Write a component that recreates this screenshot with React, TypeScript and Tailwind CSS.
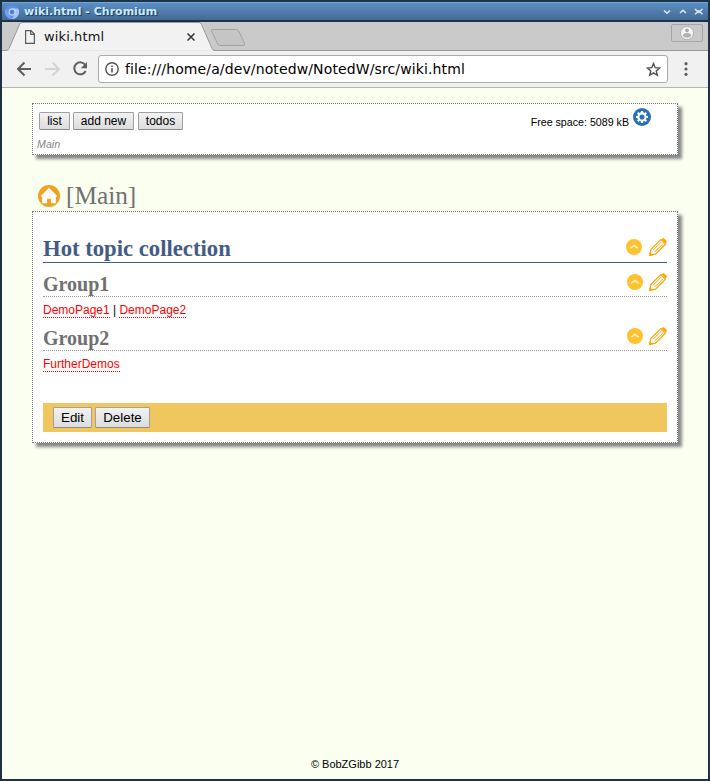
import React from 'react';

const SmallButton = ({ label, className }: { label: string; className: string }) => (
  <button
    className={`box-border flex h-[18px] shrink-0 items-center justify-center whitespace-nowrap rounded-[1.5px] border border-[#a0a0a0] border-b-[#8a8a8a] bg-linear-to-b from-[#f2f2f2] to-[#dddddd] p-0 text-[12px] leading-[14px] text-black ${className}`}
  >
    {label}
  </button>
);

const FooterButton = ({ label, className }: { label: string; className: string }) => (
  <button
    className={`box-border flex h-[21px] shrink-0 items-center justify-center rounded-[1.5px] border border-[#a0a0a0] border-b-[#8a8a8a] bg-linear-to-b from-[#f2f2f2] to-[#dddddd] p-0 text-[13.33px] leading-[15px] text-black ${className}`}
  >
    {label}
  </button>
);

const CollapseIcon = () => (
  <svg width="16" height="16" viewBox="0 0 16 16" className="shrink-0">
    <circle cx="8" cy="8" r="8" fill="#ffc12e" />
    <path d="M4.7 8.9 8 6.5l3.3 2.4" fill="none" stroke="#fff5d8" strokeWidth="1.5" strokeLinecap="round" />
  </svg>
);

const PencilIcon = () => (
  <svg width="18" height="18" viewBox="0 0 18 18" className="shrink-0" fill="none" stroke="#ffa200">
    <path d="M.8 17.200 1.900 11.500 11.800 1.600 16.400 6.200 6.500 16.100Z" strokeWidth="1.200" />
    <path d="M4 12.300 12.300 4M5.700 14 14 5.700" strokeWidth="1" />
    <path d="M12.500 1.500 13.500.5Q14.400-.2 15.200.6L17.400 2.800Q18.200 3.600 17.500 4.500L16.500 5.500Z" fill="#ffa500" stroke="none" />
    <path d="m0 18 .8-4 3.200 3.200Z" fill="#ffa500" stroke="none" />
  </svg>
);

const SectionTools = ({ className }: { className: string }) => (
  <div className={`flex items-center ${className}`}>
    <CollapseIcon />
    <PencilIcon />
  </div>
);

const Group = ({ title }: { title: string }) => (
  <div className="flex h-[27px] items-start justify-between border-b border-dotted border-[#999]">
    <h2 className="pt-px font-['Liberation_Serif',serif] text-[20px] leading-[26px] font-bold text-[#707070]">{title}</h2>
    <SectionTools className="mt-[3px] gap-[6px]" />
  </div>
);

const WikiLink = ({ label }: { label: string }) => (
  <a className="h-[15px] border-b border-dotted border-[#f00] text-[#f00]">{label}</a>
);

const TitleBar = () => (
  <div className="flex h-[18px] items-center border-t border-[#6fa8dc] bg-linear-to-b from-[#5c8fc3] to-[#446a96] pr-[5px] pl-[3px]">
    <svg width="14" height="14" viewBox="0 0 14 14">
      <circle cx="7" cy="7" r="7" fill="#5b8def" />
      <path d="M7 3.5h6.1A7 7 0 0 1 7 14L10 8.8Z" fill="#a6c4f8" />
      <path d="M1 3.4 4 8.8 7 14A7 7 0 0 1 1 3.4Z" fill="#779ff0" />
      <circle cx="7" cy="7" r="3.4" fill="#e4eefc" />
      <circle cx="7" cy="7" r="2.5" fill="#4a7fdf" />
    </svg>
    <span className="ml-[5px] grow font-['DejaVu_Sans',sans-serif] text-[11px] leading-[14px] font-bold text-[#c8eaff] [text-shadow:1px_1px_1px_#1b3858]">
      wiki.html - Chromium
    </span>
    <svg width="40" height="10" viewBox="0 0 40 10" fill="none" stroke="#dce9f5" strokeWidth="1.5">
      <path d="m1 3.5 3 2.700 3-2.700M17 6l3-2.700 3 2.700M32 2c2.500 3 5 3 7.500 0M32 7.200c2.500-3 5-3 7.500 0" />
    </svg>
  </div>
);

const TabStrip = () => (
  <div className="relative flex h-[29px] border-b border-[#999] bg-[#cacaca] font-['DejaVu_Sans',sans-serif]">
    <svg className="absolute top-0 left-0" width="246" height="29" viewBox="0 0 246 29">
      <path d="M0 28.500H4Q6 28.500 7 26.500L17.500 2.500Q18.500.5 20 .5H197Q198.500.5 199.500 2.500L210 26.500Q211 28.500 213 28.500" fill="#f2f2f2" stroke="#999" />
      <path d="M5.500 29H211" stroke="#f2f2f2" strokeWidth="1.500" />
      <path d="M210.500 7.500H234.500Q236 7.500 236.700 9L242.500 21.500Q243 23.500 241 23.500H218Q216.500 23.500 215.700 22L209.500 9Q209 7.500 210.500 7.500Z" fill="#c5c5c5" stroke="#a2a2a2" />
    </svg>
    <div className="relative flex h-full w-[193px] items-center pt-px pl-[23px]">
      <svg width="10" height="14" viewBox="0 0 10 14" fill="none" stroke="#5a5a5a" strokeWidth="1.200">
        <path d="M.6.6H6L9.400 4V13.400H.6ZM5.700.7V4.300H9.300" />
      </svg>
      <span className="ml-[9px] grow text-[13px] leading-[18px] tracking-[0.12px] text-[#111]">wiki.html</span>
      <svg width="8" height="8" viewBox="0 0 8 8" stroke="#333" strokeWidth="1.500">
        <path d="m.5.5 7 7m0-7-7 7" />
      </svg>
    </div>
    <div className="mt-[2px] mr-[5px] ml-auto flex h-[18px] w-[32px] items-center justify-center rounded-[2px] border border-[#a6a6a6] bg-[#c9c9c9]">
      <svg width="14" height="14" viewBox="0 0 14 14">
        <circle cx="7" cy="7" r="6.500" fill="#f6f6f6" stroke="#999" strokeWidth=".6" />
        <circle cx="7" cy="4.300" r="1.900" fill="#aaa" />
        <ellipse cx="7" cy="9.300" rx="3.800" ry="1.900" fill="#b5b5b5" stroke="#999" strokeWidth=".6" />
      </svg>
    </div>
  </div>
);

const Toolbar = () => (
  <div className="flex h-[37px] items-center border-b border-[#b5b5b5] bg-[#f1f1f1] pl-[15px]">
    <svg width="72" height="16" viewBox="0 0 72 16" fill="none" strokeWidth="2" className="shrink-0">
      <path d="M14 8H1.500M7.500 1.500 1 8l6.500 6.500" stroke="#5c5e61" />
      <path d="M28 8H41.500M35.500 1.500 42 8l-6.500 6.500" stroke="#d3d4d5" />
      <path d="M68.300 4A6 6 0 1 0 68.700 10" stroke="#5c5e61" />
      <path d="M70 1v6.200h-6.200Z" fill="#5c5e61" />
    </svg>
    <div className="ml-[9px] flex h-[28px] w-[570px] shrink-0 items-center rounded-[3px] border border-[#aaa] bg-white pr-[6px] pl-[6px]">
      <svg width="14" height="14" viewBox="0 0 14 14" fill="none" stroke="#555">
        <circle cx="7" cy="7" r="6.200" strokeWidth="1.400" />
        <path d="M7 6.200v4.300M7 3.500v1.600" strokeWidth="1.600" />
      </svg>
      <span className="ml-[6px] grow font-['DejaVu_Sans',sans-serif] text-[14px] leading-[20px] tracking-[0.12px] whitespace-nowrap text-black">
        file:///home/a/dev/notedw/NotedW/src/wiki.html
      </span>
      <svg width="15" height="15" viewBox="0 0 15 15" fill="none" stroke="#505050" strokeWidth="1.400">
        <path d="m7.500 1.500 1.700 4.200 4.400.3-3.400 2.900 1.100 4.400-3.800-2.400-3.800 2.400 1.100-4.400L1.400 6l4.400-.3Z" />
      </svg>
    </div>
    <svg className="ml-[16px]" width="4" height="14" viewBox="0 0 4 14" fill="#5c5e61">
      <circle cx="2" cy="1.700" r="1.600" />
      <circle cx="2" cy="7" r="1.600" />
      <circle cx="2" cy="12.300" r="1.600" />
    </svg>
  </div>
);

const SettingsIcon = () => (
  <svg width="18" height="18" viewBox="0 0 18 18" className="ml-[4px]">
    <circle cx="9" cy="9" r="9" fill="#2870b8" />
    <g stroke="#fff" fill="none">
      <circle cx="9" cy="9" r="3.600" strokeWidth="2.100" />
      <path d="M9 3v2M9 13v2M3 9h2M13 9h2M4.760 4.760l1.400 1.400M11.840 11.840l1.400 1.400M4.760 13.240l1.400-1.400M11.840 6.160l1.400-1.400" strokeWidth="2.200" />
    </g>
  </svg>
);

const HomeIcon = () => (
  <svg width="22" height="22" viewBox="0 0 23 23">
    <circle cx="11.500" cy="11.500" r="11.500" fill="#f0a220" />
    <path d="M11.500 2.800 20.300 11.800 18.600 12.600V19H13.500V14.500H9.500V19H4.400V12.600L2.700 11.800Z" fill="#fff" />
  </svg>
);

export default function App() {
  return (
    <div className="flex h-[781px] w-[710px] flex-col border-2 border-[#1f3245] bg-[#fbfff0] font-['Liberation_Sans',Arial,sans-serif] text-black">
      <TitleBar />
      <div className="h-[2px] bg-[#1f3245]" />
      <TabStrip />
      <Toolbar />
      <main className="flex grow flex-col pt-[15px] pl-[30px]">
        <header className="h-[52px] w-[646px] border border-dotted border-[#777] bg-white shadow-[4px_4px_3px_#888]">
          <div className="flex h-[31px] items-start pr-[26px] pl-[6px]">
            <div className="flex pt-[8px]">
              <SmallButton label="list" className="w-[31px]" />
              <SmallButton label="add new" className="ml-[3px] w-[61px]" />
              <SmallButton label="todos" className="ml-[4px] w-[45px]" />
            </div>
            <div className="mt-[4px] ml-auto flex">
              <span className="mt-[8px] text-[10.67px] leading-[13px]">Free space: 5089 kB</span>
              <SettingsIcon />
            </div>
          </div>
          <div className="pt-[3px] pl-[4px] text-[10.67px] leading-[13px] text-[#888] italic">Main</div>
        </header>

        <div className="mt-[26px] flex h-[30px] items-start pl-[6px]">
          <div className="pt-[4px]"><HomeIcon /></div>
          <h1 className="ml-[6px] font-['Liberation_Serif',serif] text-[25.3px] leading-[28px] text-[#707070]">[Main]</h1>
        </div>

        <section className="h-[232px] w-[646px] border border-dotted border-[#777] bg-white px-[10px] pt-[21px] shadow-[4px_4px_3px_#888]">
          <div className="flex h-[30px] items-start justify-between border-b border-[#3f5f88]">
            <h2 className="pt-[2px] font-['Liberation_Serif',serif] text-[22.7px] leading-[28px] font-bold text-[#445c85]">Hot topic collection</h2>
            <SectionTools className="mt-[5px] gap-[7px]" />
          </div>
          <div className="h-[7px]" />
          <Group title="Group1" />
          <div className="flex h-[27px] items-start pt-[6px] text-[12px] leading-[14px]">
            <WikiLink label="DemoPage1" />
            <span className="px-[3.300px]">|</span>
            <WikiLink label="DemoPage2" />
          </div>
          <Group title="Group2" />
          <div className="flex h-[52px] items-start pt-[6px] text-[12px] leading-[14px]">
            <WikiLink label="FurtherDemos" />
          </div>
          <div className="flex h-[29px] items-center gap-[3px] bg-[#f0c75e] pl-[10px]">
            <FooterButton label="Edit" className="w-[39px]" />
            <FooterButton label="Delete" className="w-[55px]" />
          </div>
        </section>

        <footer className="mt-auto mb-[8px] w-[646px] text-center text-[11px] leading-[13px]">© BobZGibb 2017</footer>
      </main>
    </div>
  );
}
